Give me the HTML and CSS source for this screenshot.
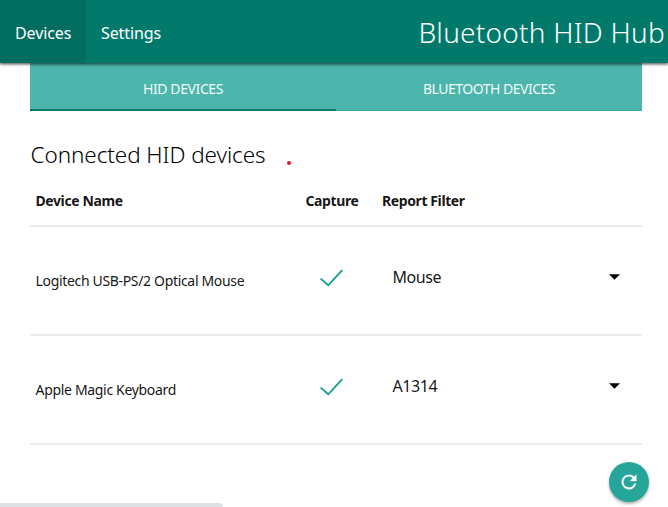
FILE: index.html
```html
<!DOCTYPE html>
<html lang="en">
<head>
<meta charset="utf-8">
<title>Bluetooth HID Hub</title>
<link rel="stylesheet" href="styles.css">
</head>
<body>
<nav class="navbar">
  <a class="nav-link active"><span class="nav-a">Devices</span></a>
  <a class="nav-link"><span class="nav-b">Settings</span></a>
  <span class="brand">Bluetooth HID Hub</span>
</nav>
<main class="container">
  <div class="tabs">
    <a class="tab selected"><span class="tab-a">HID DEVICES</span></a>
    <a class="tab"><span class="tab-b">BLUETOOTH DEVICES</span></a>
  </div>
  <h1 class="title"><span>Connected HID devices</span><i class="dot"></i></h1>
  <div class="row head">
    <span class="h-name">Device Name</span>
    <span class="h-capture">Capture</span>
    <span class="h-filter">Report Filter</span>
  </div>
  <div class="row device">
    <span class="name name-a">Logitech USB-PS/2 Optical Mouse</span>
    <svg class="check" viewBox="0 0 26 20"><path d="M1.6 9.6 9.3 16.3 23.2 1.2" fill="none" stroke="#189e91" stroke-width="1.9"/></svg>
    <div class="select"><span class="value-a">Mouse</span><svg class="caret" viewBox="0 0 10 5"><path d="M0 0h10L5 5z"/></svg></div>
  </div>
  <div class="row device">
    <span class="name name-b">Apple Magic Keyboard</span>
    <svg class="check" viewBox="0 0 26 20"><path d="M1.6 9.6 9.3 16.3 23.2 1.2" fill="none" stroke="#189e91" stroke-width="1.9"/></svg>
    <div class="select"><span class="value-b">A1314</span><svg class="caret" viewBox="0 0 10 5"><path d="M0 0h10L5 5z"/></svg></div>
  </div>
</main>
<button class="fab" aria-label="Refresh"><svg viewBox="0 0 24 24"><path fill="#fff" stroke="#fff" stroke-width=".3" d="M17.65 6.35A7.96 7.96 0 0 0 12 4a8 8 0 1 0 7.73 10h-2.08A6 6 0 1 1 12 6c1.66 0 3.14.69 4.22 1.78L13 11h7V4z"/></svg></button>
<div class="status"></div>
</body>
</html>
```

FILE: styles.css
```css
* { box-sizing: border-box; }
body {
  margin: 0;
  height: 507px;
  overflow: hidden;
  background: #fff;
  color: rgba(0, 0, 0, .93);
  font-family: "Noto Sans", "Open Sans", sans-serif;
}
span { white-space: nowrap; }
.navbar {
  position: relative;
  z-index: 1;
  display: flex;
  height: 63px;
  background: #00796b;
  color: #fff;
  box-shadow: 0 1px 3px rgba(0, 0, 0, .6), 0 2px 2px rgba(0, 0, 0, .14);
}
.nav-link { padding: 0 15px; font-size: 16px; line-height: 66px; }
.nav-link.active { width: 86px; background: #016d60; }
.nav-a { letter-spacing: -.1px; }
.nav-b { letter-spacing: -.1px; }
.brand { margin-left: auto; padding-right: 3px; font-size: 28px; font-weight: 350; line-height: 65px; letter-spacing: .25px; }
.container { width: 612px; margin-left: 30px; }
.tabs { display: flex; height: 48px; background: #4db6ac; color: #fff; border-bottom: 1px solid #3aada2; }
.tab { flex: 1; height: 48px; text-align: center; font-size: 14px; line-height: 52px; }
.tab.selected { border-bottom: 2px solid #00796b; }
.tab-a { letter-spacing: -.4px; opacity: .93; }
.tab-b { letter-spacing: -.5px; opacity: .93; }
.title { display: flex; align-items: center; height: 66px; margin: 10px 0 1px; padding-left: .5px; font-size: 22.5px; font-weight: 350; letter-spacing: -.08px; color: #000; }
.dot { width: 4px; height: 4px; margin: 18px 0 0 21px; border-radius: 50%; background: #e81123; }
.row { display: grid; grid-template-columns: 270px 77px 1fr; align-items: center; border-bottom: 2px solid #ebebeb; }
.head { height: 39px; padding: 0 5px 13px 5.5px; font-size: 14px; font-weight: 700; letter-spacing: -.4px; }
.h-filter { margin-left: -.5px; }
.device { height: 109px; padding-left: 5.5px; }
.name { font-size: 14px; }
.name-a { letter-spacing: -.33px; }
.name-b { letter-spacing: -.32px; }
.value-a { letter-spacing: -.45px; }
.value-b { letter-spacing: -.4px; }
.check { width: 26px; height: 20px; margin-left: 13.5px; margin-top: -4px; }
.select { display: flex; justify-content: space-between; align-items: center; padding: 0 22px 0 10px; margin-top: -7px; font-size: 16px; }
.caret { width: 11px; height: 6px; }
.fab {
  position: absolute;
  left: 609px;
  top: 462px;
  width: 40px;
  height: 40px;
  padding: 9px;
  border: 0;
  border-radius: 50%;
  background: #26a69a;
  box-shadow: 0 2px 3px rgba(0, 0, 0, .3);
}
.fab svg { display: block; width: 22px; height: 22px; }
.status { position: absolute; left: 0; bottom: 0; width: 223px; height: 4px; border-radius: 0 4px 0 0; background: #dee1e4; }
```
